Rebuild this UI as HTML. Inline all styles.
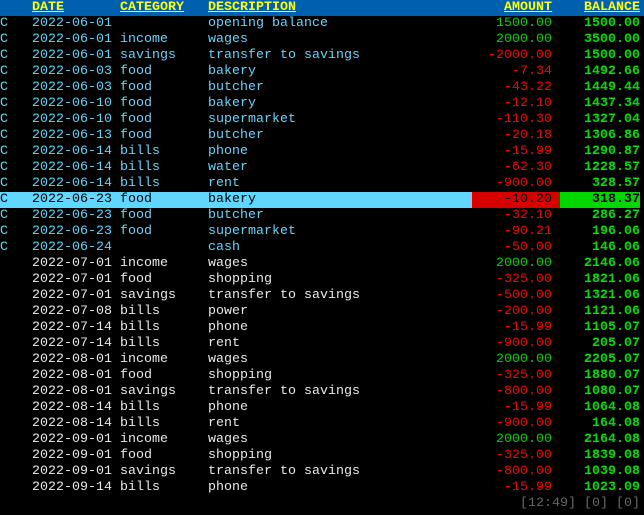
<!DOCTYPE html>
<html><head><style>
body{margin:0;background:#000;width:644px;height:515px;overflow:hidden;font-family:"Liberation Mono","DejaVu Sans Mono",monospace;font-size:13.33px;}
.r{position:absolute;left:0;width:644px;height:16px;line-height:16px;color:#5fd7ff;white-space:pre}
.r span{position:absolute;top:0}
.w{color:#e8e8e8}
.c0{left:0}.c1{left:32px}.c2{left:120px}.c3{left:208px}
.a{right:92px;color:#f00}.a.p{color:#00d700}
.b{right:4px;color:#00e000;font-weight:bold}
.h{background:#0060b0;color:#ff0;font-weight:bold}
.h span{text-decoration:underline}
.hl{background:#5fd7ff;color:#000;width:472px}
</style></head><body>
<div class="r h" style="top:0"><span class="c1">DATE</span><span class="c2">CATEGORY</span><span class="c3">DESCRIPTION</span><span style="right:92px">AMOUNT</span><span style="right:4px">BALANCE</span></div>

<div class="r" style="top:16px"><span class="c0">C</span><span class="c1">2022-06-01</span><span class="c3">opening balance</span><span class="a p">1500.00</span><span class="b">1500.00</span></div>
<div class="r" style="top:32px"><span class="c0">C</span><span class="c1">2022-06-01</span><span class="c2">income</span><span class="c3">wages</span><span class="a p">2000.00</span><span class="b">3500.00</span></div>
<div class="r" style="top:48px"><span class="c0">C</span><span class="c1">2022-06-01</span><span class="c2">savings</span><span class="c3">transfer to savings</span><span class="a">-2000.00</span><span class="b">1500.00</span></div>
<div class="r" style="top:64px"><span class="c0">C</span><span class="c1">2022-06-03</span><span class="c2">food</span><span class="c3">bakery</span><span class="a">-7.34</span><span class="b">1492.66</span></div>
<div class="r" style="top:80px"><span class="c0">C</span><span class="c1">2022-06-03</span><span class="c2">food</span><span class="c3">butcher</span><span class="a">-43.22</span><span class="b">1449.44</span></div>
<div class="r" style="top:96px"><span class="c0">C</span><span class="c1">2022-06-10</span><span class="c2">food</span><span class="c3">bakery</span><span class="a">-12.10</span><span class="b">1437.34</span></div>
<div class="r" style="top:112px"><span class="c0">C</span><span class="c1">2022-06-10</span><span class="c2">food</span><span class="c3">supermarket</span><span class="a">-110.30</span><span class="b">1327.04</span></div>
<div class="r" style="top:128px"><span class="c0">C</span><span class="c1">2022-06-13</span><span class="c2">food</span><span class="c3">butcher</span><span class="a">-20.18</span><span class="b">1306.86</span></div>
<div class="r" style="top:144px"><span class="c0">C</span><span class="c1">2022-06-14</span><span class="c2">bills</span><span class="c3">phone</span><span class="a">-15.99</span><span class="b">1290.87</span></div>
<div class="r" style="top:160px"><span class="c0">C</span><span class="c1">2022-06-14</span><span class="c2">bills</span><span class="c3">water</span><span class="a">-62.30</span><span class="b">1228.57</span></div>
<div class="r" style="top:176px"><span class="c0">C</span><span class="c1">2022-06-14</span><span class="c2">bills</span><span class="c3">rent</span><span class="a">-900.00</span><span class="b">328.57</span></div>
<div class="r" style="top:192px"><div style="position:absolute;left:0;top:0;width:472px;height:16px;background:#5fd7ff"></div><div style="position:absolute;left:472px;top:0;width:88px;height:16px;background:#d70000"></div><div style="position:absolute;left:560px;top:0;width:80px;height:16px;background:#00d700"></div><span class="c0" style="color:#000">C</span><span class="c1" style="color:#000">2022-06-23</span><span class="c2" style="color:#000">food</span><span class="c3" style="color:#000">bakery</span><span class="a" style="color:#000">-10.20</span><span class="b" style="color:#000">318.37</span></div>
<div class="r" style="top:208px"><span class="c0">C</span><span class="c1">2022-06-23</span><span class="c2">food</span><span class="c3">butcher</span><span class="a">-32.10</span><span class="b">286.27</span></div>
<div class="r" style="top:224px"><span class="c0">C</span><span class="c1">2022-06-23</span><span class="c2">food</span><span class="c3">supermarket</span><span class="a">-90.21</span><span class="b">196.06</span></div>
<div class="r" style="top:240px"><span class="c0">C</span><span class="c1">2022-06-24</span><span class="c3">cash</span><span class="a">-50.00</span><span class="b">146.06</span></div>
<div class="r w" style="top:256px"><span class="c1">2022-07-01</span><span class="c2">income</span><span class="c3">wages</span><span class="a p">2000.00</span><span class="b">2146.06</span></div>
<div class="r w" style="top:272px"><span class="c1">2022-07-01</span><span class="c2">food</span><span class="c3">shopping</span><span class="a">-325.00</span><span class="b">1821.06</span></div>
<div class="r w" style="top:288px"><span class="c1">2022-07-01</span><span class="c2">savings</span><span class="c3">transfer to savings</span><span class="a">-500.00</span><span class="b">1321.06</span></div>
<div class="r w" style="top:304px"><span class="c1">2022-07-08</span><span class="c2">bills</span><span class="c3">power</span><span class="a">-200.00</span><span class="b">1121.06</span></div>
<div class="r w" style="top:320px"><span class="c1">2022-07-14</span><span class="c2">bills</span><span class="c3">phone</span><span class="a">-15.99</span><span class="b">1105.07</span></div>
<div class="r w" style="top:336px"><span class="c1">2022-07-14</span><span class="c2">bills</span><span class="c3">rent</span><span class="a">-900.00</span><span class="b">205.07</span></div>
<div class="r w" style="top:352px"><span class="c1">2022-08-01</span><span class="c2">income</span><span class="c3">wages</span><span class="a p">2000.00</span><span class="b">2205.07</span></div>
<div class="r w" style="top:368px"><span class="c1">2022-08-01</span><span class="c2">food</span><span class="c3">shopping</span><span class="a">-325.00</span><span class="b">1880.07</span></div>
<div class="r w" style="top:384px"><span class="c1">2022-08-01</span><span class="c2">savings</span><span class="c3">transfer to savings</span><span class="a">-800.00</span><span class="b">1080.07</span></div>
<div class="r w" style="top:400px"><span class="c1">2022-08-14</span><span class="c2">bills</span><span class="c3">phone</span><span class="a">-15.99</span><span class="b">1064.08</span></div>
<div class="r w" style="top:416px"><span class="c1">2022-08-14</span><span class="c2">bills</span><span class="c3">rent</span><span class="a">-900.00</span><span class="b">164.08</span></div>
<div class="r w" style="top:432px"><span class="c1">2022-09-01</span><span class="c2">income</span><span class="c3">wages</span><span class="a p">2000.00</span><span class="b">2164.08</span></div>
<div class="r w" style="top:448px"><span class="c1">2022-09-01</span><span class="c2">food</span><span class="c3">shopping</span><span class="a">-325.00</span><span class="b">1839.08</span></div>
<div class="r w" style="top:464px"><span class="c1">2022-09-01</span><span class="c2">savings</span><span class="c3">transfer to savings</span><span class="a">-800.00</span><span class="b">1039.08</span></div>
<div class="r w" style="top:480px"><span class="c1">2022-09-14</span><span class="c2">bills</span><span class="c3">phone</span><span class="a">-15.99</span><span class="b">1023.09</span></div>
<div class="r" style="top:496px;color:#666"><span style="right:4px">[12:49] [0] [0]</span></div>
</body></html>
